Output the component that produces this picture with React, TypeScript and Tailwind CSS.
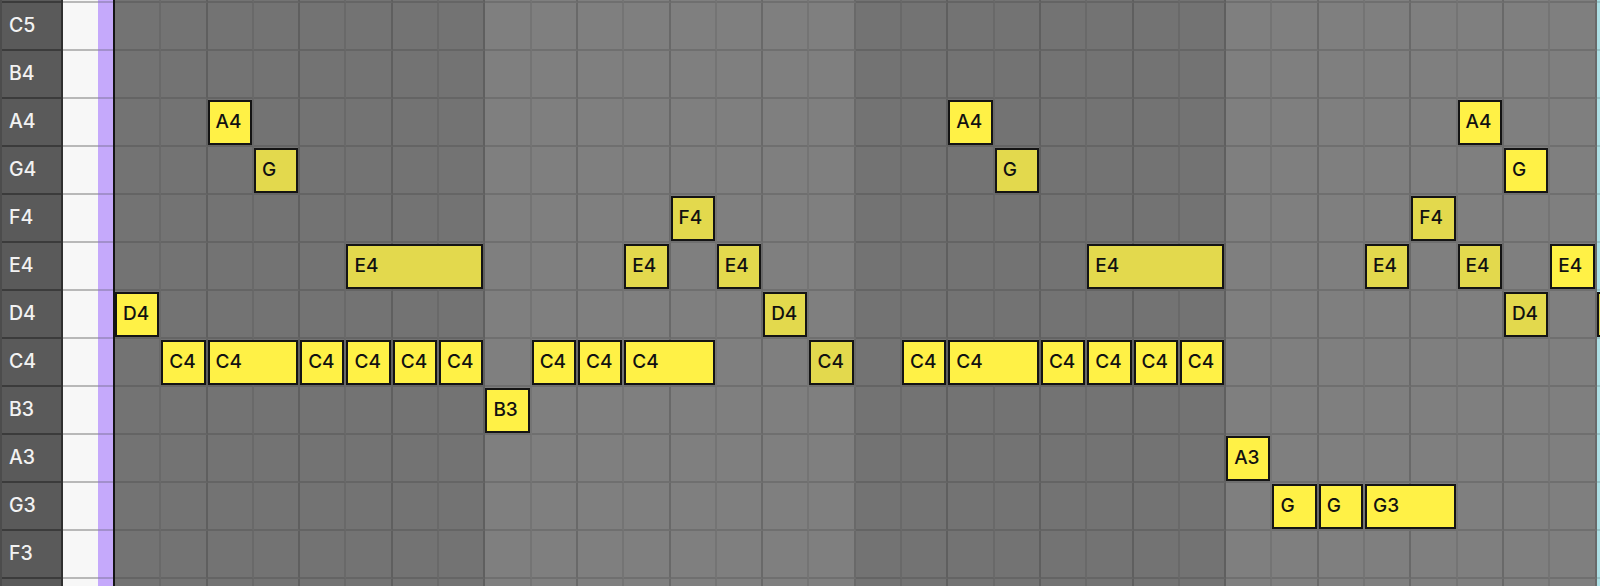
import React from "react";

// Piano-roll rows, top to bottom (natural notes only); the first and last rows are scrolled mostly out of view
const ROWS = ["D5", "C5", "B4", "A4", "G4", "F4", "E4", "D4", "C4", "B3", "A3", "G3", "F3", "E3"];
const EDGE_ROWS = new Set(["D5", "E3"]);
const COLS = 33;

type Note = { label: string; pitch: string; col: number; len: number; accent: boolean };

const n = (label: string, pitch: string, col: number, len: number, accent: boolean): Note => ({
  label,
  pitch,
  col,
  len,
  accent,
});

const NOTES: Note[] = [
  n("D4", "D4", 0, 1, true),
  n("C4", "C4", 1, 1, true),
  n("C4", "C4", 2, 2, true),
  n("C4", "C4", 4, 1, true),
  n("C4", "C4", 5, 1, true),
  n("C4", "C4", 6, 1, true),
  n("C4", "C4", 7, 1, true),
  n("A4", "A4", 2, 1, true),
  n("G", "G4", 3, 1, false),
  n("E4", "E4", 5, 3, false),
  n("B3", "B3", 8, 1, true),
  n("C4", "C4", 9, 1, true),
  n("C4", "C4", 10, 1, true),
  n("C4", "C4", 11, 2, true),
  n("E4", "E4", 11, 1, false),
  n("F4", "F4", 12, 1, false),
  n("E4", "E4", 13, 1, false),
  n("D4", "D4", 14, 1, false),
  n("C4", "C4", 15, 1, false),
  n("C4", "C4", 17, 1, true),
  n("C4", "C4", 18, 2, true),
  n("C4", "C4", 20, 1, true),
  n("C4", "C4", 21, 1, true),
  n("C4", "C4", 22, 1, true),
  n("C4", "C4", 23, 1, true),
  n("A4", "A4", 18, 1, true),
  n("G", "G4", 19, 1, false),
  n("E4", "E4", 21, 3, false),
  n("A3", "A3", 24, 1, true),
  n("G", "G3", 25, 1, true),
  n("G", "G3", 26, 1, true),
  n("G3", "G3", 27, 2, true),
  n("E4", "E4", 27, 1, false),
  n("F4", "F4", 28, 1, false),
  n("A4", "A4", 29, 1, true),
  n("E4", "E4", 29, 1, false),
  n("G", "G4", 30, 1, true),
  n("D4", "D4", 30, 1, false),
  n("E4", "E4", 31, 1, true),
  // starts at the loop boundary, only its left edge is in view
  n("", "D4", 32, 1, false),
];

function cellClass(col: number): string {
  const bar = Math.floor(col / 8);
  let bg = bar % 2 === 0 ? "bg-[#737373]" : "bg-[#7f7f7f]";
  if (col >= 32) bg = "bg-[#ace0e6]";
  const strong = (col + 1) % 2 === 0;
  const right = strong ? "border-r-black/[0.17]" : "border-r-black/[0.08]";
  return `border-r-2 border-b-2 border-b-black/[0.12] ${right} ${bg}`;
}

export default function App() {
  return (
    <div className="h-[586px] w-[1600px] overflow-hidden bg-[#737373] font-['Inter','Noto_Sans',sans-serif]">
      <div className="-mt-[45px] flex">
        {/* note names */}
        <div className="flex w-[63px] shrink-0 flex-col border-l-2 border-r-2 border-l-[#4c4c4c] border-r-[#2f2f2f]">
          {ROWS.map((r) => (
            <div
              key={r}
              className="flex h-[48px] items-center border-b-2 border-[#3b3b3b] bg-[#5a5a5a] pl-[7px] text-[19.5px] font-medium text-[#f2f2f2]"
            >
              {EDGE_ROWS.has(r) ? "" : r}
            </div>
          ))}
        </div>
        {/* keys */}
        <div className="flex w-[35px] shrink-0 flex-col">
          {ROWS.map((r) => (
            <div key={r} className="h-[48px] border-b-2 border-[#b8b8b8] bg-[#f7f7f7]" />
          ))}
        </div>
        {/* track colour strip */}
        <div className="flex w-[15px] shrink-0 flex-col">
          {ROWS.map((r) => (
            <div key={r} className="h-[48px] border-b-2 border-[#a28fcc] bg-[#c5a9fb]" />
          ))}
        </div>
        <div className="w-[2px] shrink-0 bg-[#151515]" />
        {/* note grid */}
        <div className="grid shrink-0 grid-cols-[repeat(33,46.31px)] grid-rows-[repeat(14,48px)]">
          {ROWS.map((r, ri) =>
            Array.from({ length: COLS }, (_, ci) => (
              <div
                key={`${r}-${ci}`}
                className={cellClass(ci)}
                style={{ gridColumn: ci + 1, gridRow: ri + 1 }}
              />
            ))
          )}
          {NOTES.map((note, i) => {
            const row = ROWS.indexOf(note.pitch);
            return (
              <div
                key={i}
                className={`z-10 mt-px mr-[2px] mb-[2px] flex items-center border-2 border-[#141414] pl-[6px] text-[19px] font-medium text-[#111] ${
                  note.accent ? "bg-[#fff146]" : "bg-[#e3d94d]"
                }`}
                style={{ gridColumn: `${note.col + 1} / span ${note.len}`, gridRow: row + 1 }}
              >
                {note.label}
              </div>
            );
          })}
        </div>
      </div>
    </div>
  );
}
